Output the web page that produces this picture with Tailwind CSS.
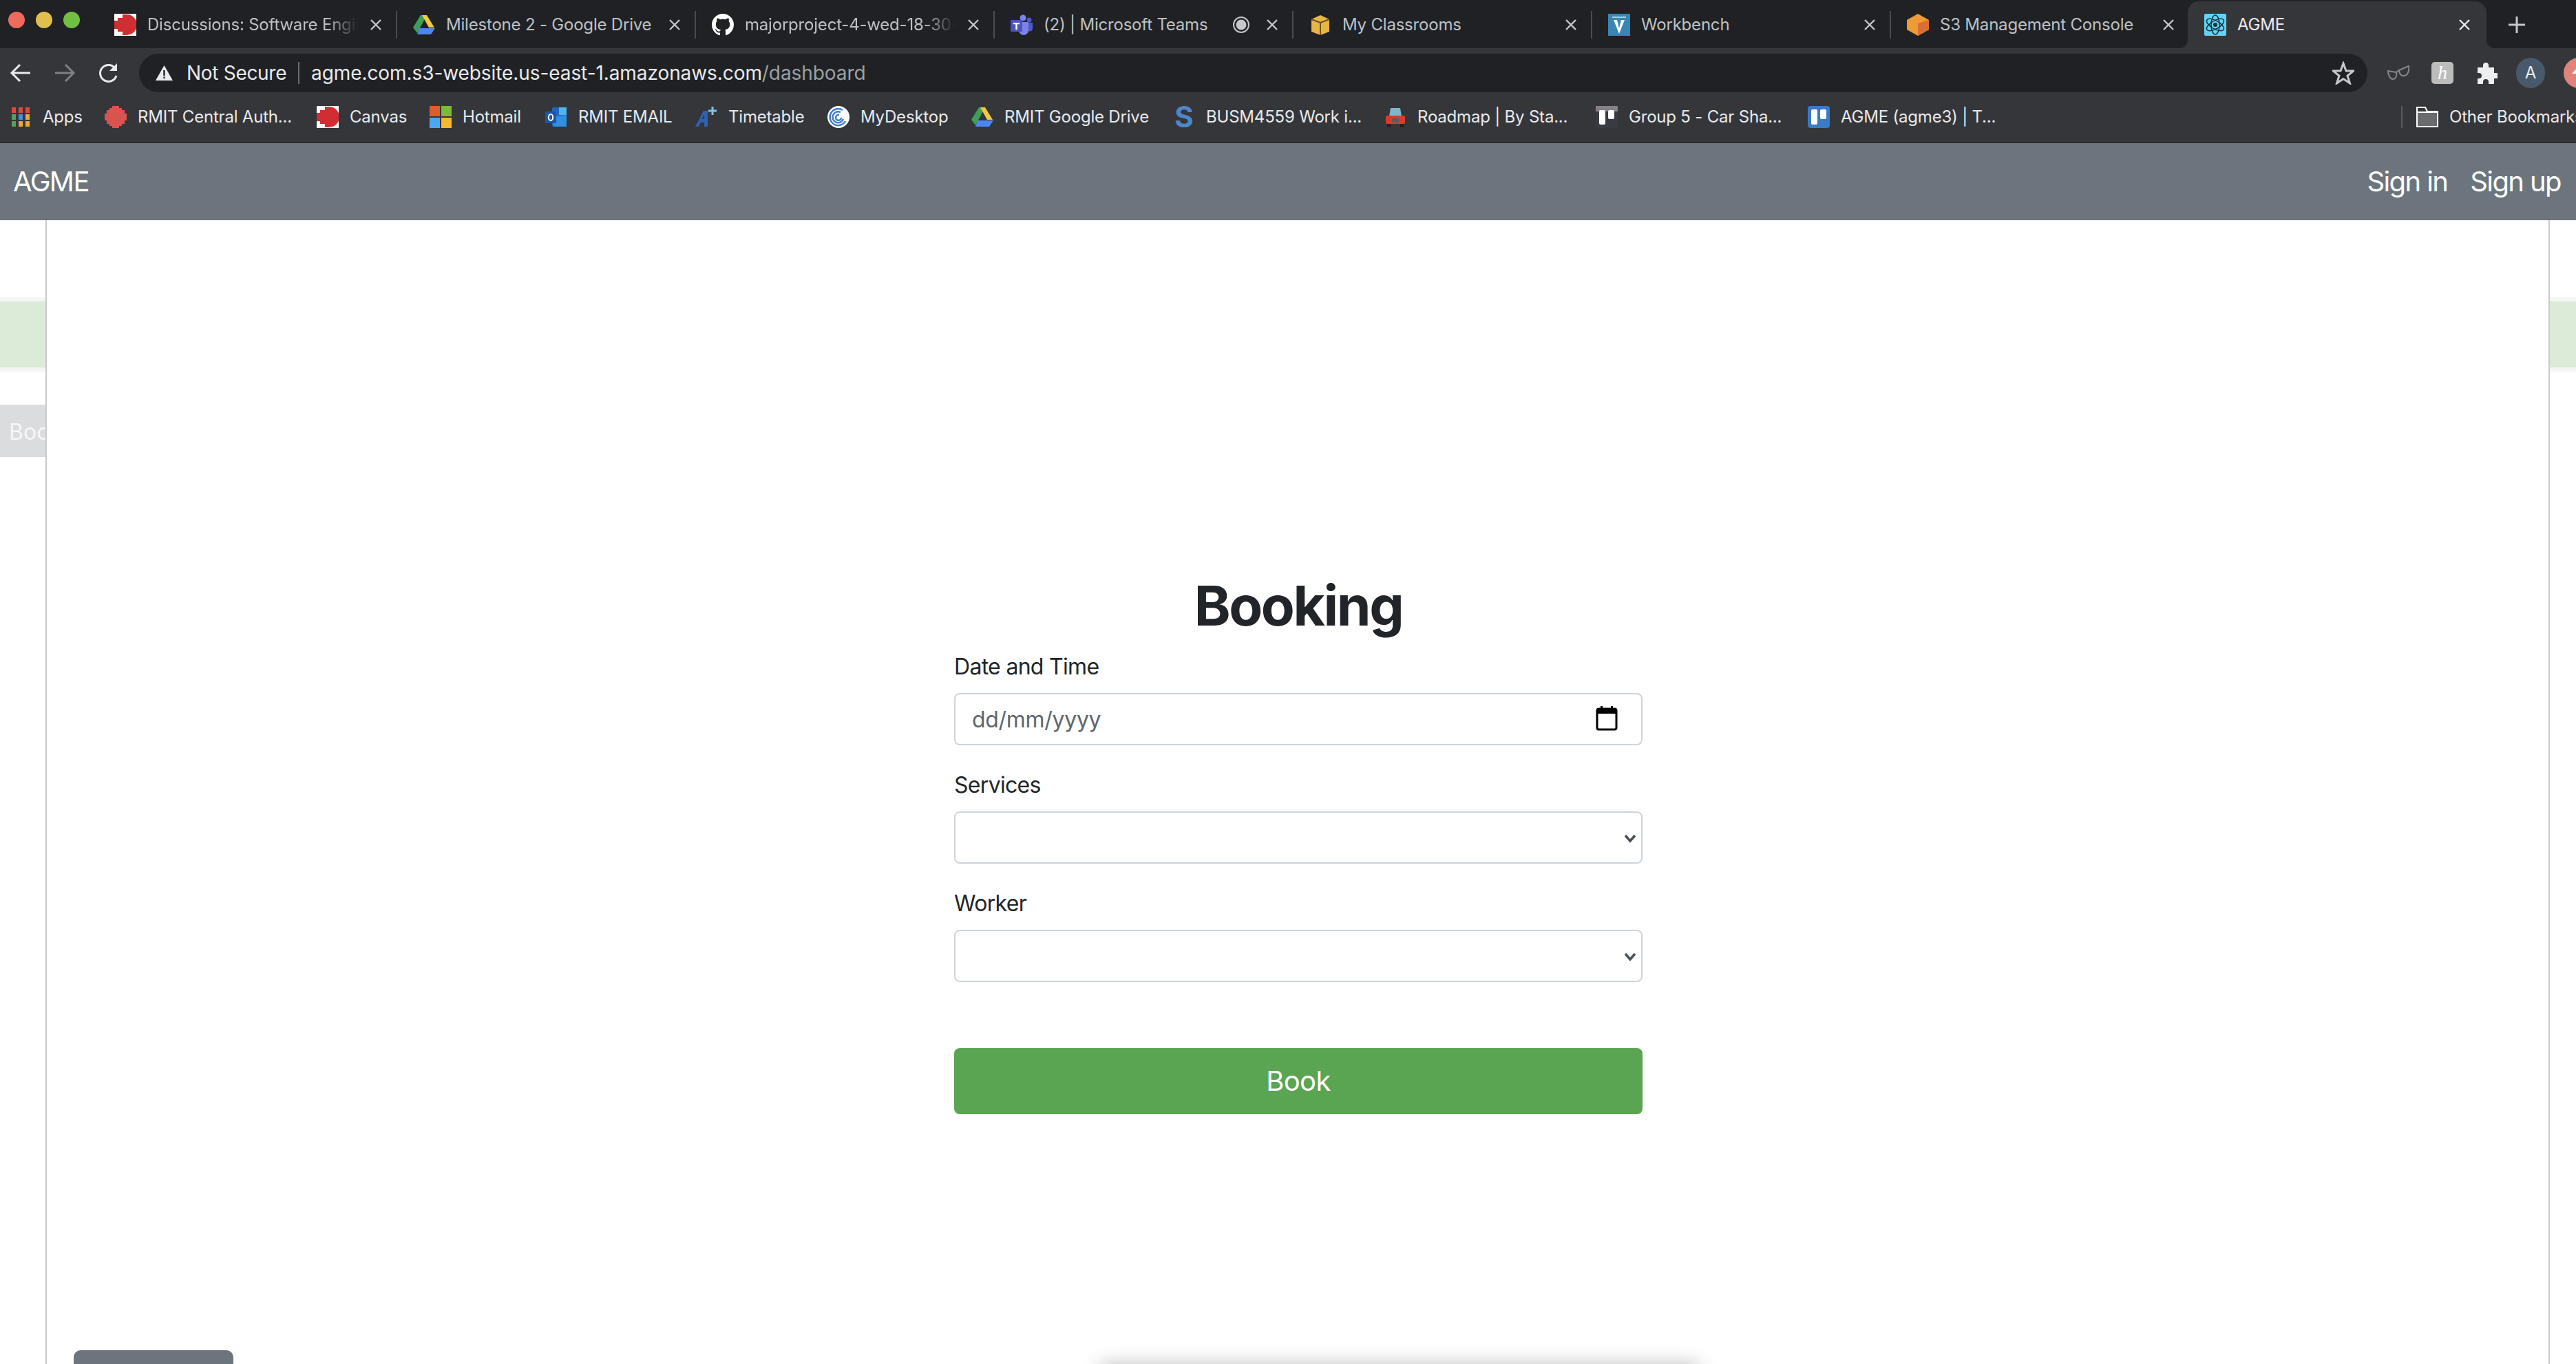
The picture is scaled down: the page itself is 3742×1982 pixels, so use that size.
<!DOCTYPE html>
<html lang="en">
<head>
<meta charset="utf-8">
<title>AGME</title>
<script src="https://cdn.jsdelivr.net/npm/@tailwindcss/browser@4"></script>
</head>
<body class="bg-white font-['Inter','Noto_Sans',sans-serif]">
<div class="flex h-[1982px] w-[3742px] flex-col overflow-hidden">

  <!-- tab strip -->
  <div class="flex h-[70px] shrink-0 items-end bg-[#202124] text-[24px] leading-[32px] tracking-[-0.2px] text-[#bdc1c6]">
    <div class="flex h-[70px] w-[143px] shrink-0 items-center pl-[12px] gap-[16px] pb-[12px]">
      <span class="h-[24px] w-[24px] rounded-full bg-[#ee6a5f]"></span>
      <span class="h-[24px] w-[24px] rounded-full bg-[#e0c04c]"></span>
      <span class="h-[24px] w-[24px] rounded-full bg-[#72c043]"></span>
    </div>

    <div class="flex h-[70px] w-[434px] shrink-0 items-center pt-[2px]">
      <div class="flex h-[40px] w-full items-center border-r-2 border-[#4a4b4f] pl-[23px]">
        <svg class="h-[32px] w-[32px] shrink-0" viewBox="0 0 32 32"><rect width="32" height="32" fill="#fff"/><path d="M12 1h6a15 15 0 0 1 0 30h-6v-5H5v-4H0V10h5V6h7z" fill="#d12e34"/></svg>
        <span class="ml-[16px] w-[306px] overflow-hidden whitespace-nowrap [mask-image:linear-gradient(to_right,black_85%,transparent)]">Discussions: Software Engineering</span>
        <svg class="ml-[16px] h-[20px] w-[20px]" viewBox="0 0 20 20"><path d="M3 3l14 14M17 3L3 17" stroke="#c4c7cb" stroke-width="2.4"/></svg>
      </div>
    </div>

    <div class="flex h-[70px] w-[434px] shrink-0 items-center pt-[2px]">
      <div class="flex h-[40px] w-full items-center border-r-2 border-[#4a4b4f] pl-[23px]">
        <svg class="h-[32px] w-[32px] shrink-0" viewBox="0 0 32 32"><path d="M11 2h9L12 17 6 28 0 20z" fill="#3f9e57"/><path d="M13 2h7l11 18h-8z" fill="#f3c93f"/><path d="M9 21h23l-6 9H6z" fill="#4f86ec"/></svg>
        <span class="ml-[16px] w-[306px] overflow-hidden whitespace-nowrap">Milestone 2 - Google Drive</span>
        <svg class="ml-[16px] h-[20px] w-[20px]" viewBox="0 0 20 20"><path d="M3 3l14 14M17 3L3 17" stroke="#c4c7cb" stroke-width="2.4"/></svg>
      </div>
    </div>

    <div class="flex h-[70px] w-[434px] shrink-0 items-center pt-[2px]">
      <div class="flex h-[40px] w-full items-center border-r-2 border-[#4a4b4f] pl-[23px]">
        <svg class="h-[32px] w-[32px] shrink-0" viewBox="0 0 16 16"><path fill="#fff" d="M8 0C3.58 0 0 3.58 0 8c0 3.54 2.29 6.53 5.47 7.59.4.07.55-.17.55-.38 0-.19-.01-.82-.01-1.49-2.01.37-2.53-.49-2.69-.94-.09-.23-.48-.94-.82-1.13-.28-.15-.68-.52-.01-.53.63-.01 1.08.58 1.23.82.72 1.21 1.87.87 2.33.66.07-.52.28-.87.51-1.07-1.78-.2-3.64-.89-3.64-3.95 0-.87.31-1.59.82-2.15-.08-.2-.36-1.02.08-2.12 0 0 .67-.21 2.2.82.64-.18 1.32-.27 2-.27.68 0 1.36.09 2 .27 1.53-1.04 2.2-.82 2.2-.82.44 1.1.16 1.92.08 2.12.51.56.82 1.27.82 2.15 0 3.07-1.87 3.75-3.65 3.95.29.25.54.73.54 1.48 0 1.07-.01 1.93-.01 2.2 0 .21.15.46.55.38A8.013 8.013 0 0016 8c0-4.42-3.58-8-8-8z"/></svg>
        <span class="ml-[16px] w-[306px] overflow-hidden whitespace-nowrap [mask-image:linear-gradient(to_right,black_85%,transparent)]">majorproject-4-wed-18-30-5</span>
        <svg class="ml-[16px] h-[20px] w-[20px]" viewBox="0 0 20 20"><path d="M3 3l14 14M17 3L3 17" stroke="#c4c7cb" stroke-width="2.4"/></svg>
      </div>
    </div>

    <div class="flex h-[70px] w-[434px] shrink-0 items-center pt-[2px]">
      <div class="flex h-[40px] w-full items-center border-r-2 border-[#4a4b4f] pl-[23px]">
        <svg class="h-[32px] w-[32px] shrink-0" viewBox="0 0 32 32"><circle cx="18" cy="6" r="4.5" fill="#7b83eb"/><circle cx="27" cy="9" r="3.5" fill="#5059c9"/><path d="M12 12h14v12a7 7 0 0 1-14 0z" fill="#7b83eb"/><path d="M26 13h6v9a4 4 0 0 1-6 3z" fill="#5059c9"/><rect y="9" width="17" height="17" rx="1.5" fill="#4b53bc"/><path d="M4 13h9v2.2h-3.3V23H7.300v-7.800H4z" fill="#fff"/></svg>
        <span class="ml-[16px] w-[262px] overflow-hidden whitespace-nowrap">(2) | Microsoft Teams</span>
        <svg class="ml-[12px] h-[26px] w-[26px] shrink-0" viewBox="0 0 26 26"><circle cx="13" cy="13" r="11" fill="none" stroke="#c4c7cb" stroke-width="2"/><circle cx="13" cy="13" r="7.500" fill="#c4c7cb"/></svg>
        <svg class="ml-[22px] h-[20px] w-[20px]" viewBox="0 0 20 20"><path d="M3 3l14 14M17 3L3 17" stroke="#c4c7cb" stroke-width="2.4"/></svg>
      </div>
    </div>

    <div class="flex h-[70px] w-[434px] shrink-0 items-center pt-[2px]">
      <div class="flex h-[40px] w-full items-center border-r-2 border-[#4a4b4f] pl-[23px]">
        <svg class="h-[32px] w-[32px] shrink-0" viewBox="0 0 32 32"><path d="M16 2l13 6v18l-13 5-13-5V8z" fill="#e8b645"/><path d="M3 8l13 5 13-5" fill="none" stroke="#6d5320" stroke-width="2"/><path d="M16 13v18" stroke="#6d5320" stroke-width="2"/></svg>
        <span class="ml-[16px] w-[306px] overflow-hidden whitespace-nowrap">My Classrooms</span>
        <svg class="ml-[16px] h-[20px] w-[20px]" viewBox="0 0 20 20"><path d="M3 3l14 14M17 3L3 17" stroke="#c4c7cb" stroke-width="2.4"/></svg>
      </div>
    </div>

    <div class="flex h-[70px] w-[434px] shrink-0 items-center pt-[2px]">
      <div class="flex h-[40px] w-full items-center border-r-2 border-[#4a4b4f] pl-[23px]">
        <svg class="h-[32px] w-[32px] shrink-0" viewBox="0 0 32 32"><rect width="32" height="32" fill="#3a85b5"/><path d="M8 9h5l3 12 3-12h5l-8 20z" fill="#fff"/><path d="M6 5h20" stroke="#a7cde4" stroke-width="2"/></svg>
        <span class="ml-[16px] w-[306px] overflow-hidden whitespace-nowrap">Workbench</span>
        <svg class="ml-[16px] h-[20px] w-[20px]" viewBox="0 0 20 20"><path d="M3 3l14 14M17 3L3 17" stroke="#c4c7cb" stroke-width="2.4"/></svg>
      </div>
    </div>

    <div class="flex h-[70px] w-[434px] shrink-0 items-center pt-[2px]">
      <div class="flex h-[40px] w-full items-center pl-[23px]">
        <svg class="h-[32px] w-[32px] shrink-0" viewBox="0 0 32 32"><path d="M16 0l16 9v14l-16 9L0 23V9z" fill="#ee9a36"/><path d="M16 14l16-5v14l-16 9z" fill="#d96f33"/></svg>
        <span class="ml-[16px] w-[306px] overflow-hidden whitespace-nowrap">S3 Management Console</span>
        <svg class="ml-[16px] h-[20px] w-[20px]" viewBox="0 0 20 20"><path d="M3 3l14 14M17 3L3 17" stroke="#c4c7cb" stroke-width="2.4"/></svg>
      </div>
    </div>

    <div class="relative ml-[-3px] flex h-[68px] w-[434px] shrink-0 items-center rounded-t-[16px] bg-[#35363a] pl-[24px] text-[#e8eaed]">
      <svg class="absolute bottom-0 left-[-12px] h-[12px] w-[12px]" viewBox="0 0 12 12"><path d="M12 0v12H0A12 12 0 0 0 12 0z" fill="#35363a"/></svg>
      <svg class="absolute bottom-0 right-[-12px] h-[12px] w-[12px]" viewBox="0 0 12 12"><path d="M0 0v12h12A12 12 0 0 1 0 0z" fill="#35363a"/></svg>
      <svg class="h-[32px] w-[32px] shrink-0" viewBox="0 0 32 32"><rect width="32" height="32" rx="2" fill="#61d3f5"/><g fill="none" stroke="#17313b" stroke-width="1.500"><ellipse cx="16" cy="16" rx="6" ry="14"/><ellipse cx="16" cy="16" rx="6" ry="14" transform="rotate(60 16 16)"/><ellipse cx="16" cy="16" rx="6" ry="14" transform="rotate(120 16 16)"/></g><circle cx="16" cy="16" r="3" fill="#17313b"/></svg>
      <span class="ml-[16px] w-[320px] overflow-hidden whitespace-nowrap">AGME</span>
      <svg class="h-[20px] w-[20px]" viewBox="0 0 20 20"><path d="M3 3l14 14M17 3L3 17" stroke="#e8eaed" stroke-width="2.4"/></svg>
    </div>

    <svg class="ml-[31px] mb-[21px] h-[26px] w-[26px] shrink-0" viewBox="0 0 26 26"><path d="M13 1v24M1 13h24" stroke="#c4c7cb" stroke-width="3"/></svg>
  </div>

  <!-- toolbar -->
  <div class="flex h-[70px] shrink-0 items-center bg-[#35363a] pt-[2px]">
    <svg class="ml-[14px] h-[32px] w-[32px] shrink-0" viewBox="0 0 32 32"><path d="M30 16H4M15 4L3 16l12 12" fill="none" stroke="#e8eaed" stroke-width="3"/></svg>
    <svg class="ml-[32px] h-[32px] w-[32px] shrink-0" viewBox="0 0 32 32"><path d="M2 16h26M17 4l12 12-12 12" fill="none" stroke="#7e8083" stroke-width="3"/></svg>
    <svg class="ml-[32px] h-[32px] w-[32px] shrink-0" viewBox="0 0 32 32"><path d="M27 20a12 12 0 1 1-2-11" fill="none" stroke="#e8eaed" stroke-width="3"/><path d="M28 2v11H17z" fill="#e8eaed"/></svg>

    <div class="ml-[28px] flex h-[56px] w-[3237px] shrink-0 items-center rounded-full bg-[#202124] pl-[24px] text-[28px] tracking-[-0.3px]">
      <svg class="h-[22px] w-[25px] shrink-0" viewBox="0 0 25 22"><path d="M12.500 0L25 22H0z" fill="#e8eaed"/><path d="M11.300 7h2.400v8h-2.400zM11.300 16.500h2.400V19h-2.400z" fill="#202124"/></svg>
      <span class="ml-[20px] w-[146px] whitespace-nowrap text-[#e8eaed]">Not Secure</span>
      <span class="ml-[16px] h-[32px] w-[2px] bg-[#6a6b6f]"></span>
      <span class="ml-[17px] whitespace-nowrap tracking-[-0.08px] text-[#e8eaed]">agme.com.s3-website.us-east-1.amazonaws.com<span class="text-[#9aa0a6]">/dashboard</span></span>
      <svg class="ml-auto mr-[19px] h-[34px] w-[32px] shrink-0" viewBox="0 0 32 34"><path d="M16 3l4 11h11l-9 7 3.500 11L16 25.500 6.500 32 10 21l-9-7h11z" fill="none" stroke="#c4c7cb" stroke-width="3"/></svg>
    </div>

    <svg class="ml-[29px] h-[26px] w-[32px] shrink-0" viewBox="0 0 32 26"><g fill="none" stroke="#85878a" stroke-width="2"><path d="M1 10l12 2c1 5-1 10-5 10s-7-6-7-12z"/><path d="M17 9l14-6c1 6-1 13-6 14s-8-3-8-8z"/><path d="M13 12l4-3"/></g></svg>
    <span class="ml-[32px] flex h-[32px] w-[32px] shrink-0 items-center justify-center rounded-[5px] bg-[#bcbcbc] font-['Liberation_Serif',serif] text-[28px] italic leading-none text-white">h</span>
    <svg class="ml-[32px] h-[32px] w-[32px] shrink-0" viewBox="0 0 32 32"><path d="M3 8h8V5a4 4 0 0 1 8 0v3h8v8h3a4 4 0 0 1 0 8h-3v8h-8v-3a4 4 0 0 0-8 0v3H3v-8h2a4 4 0 0 0 0-8H3z" fill="#eceef0"/></svg>
    <span class="ml-[27px] flex h-[44px] w-[42px] shrink-0 items-center justify-center rounded-full bg-[#47596a] text-[24px] text-[#e8eaed]">A</span>
    <span class="ml-[27px] flex h-[44px] w-[44px] shrink-0 items-center justify-center rounded-full bg-[#e0837c]">
      <svg class="h-[24px] w-[24px]" viewBox="0 0 24 24"><path d="M12 2l10 11h-6v9H8v-9H2z" fill="#fff"/></svg>
    </span>
  </div>

  <!-- bookmarks -->
  <div class="flex h-[68px] shrink-0 items-center overflow-hidden border-b-2 border-[#292a2d] bg-[#35363a] pb-[6px] pl-[14px] text-[24px] leading-[32px] tracking-[-0.2px] text-[#e8eaed]">
    <div class="flex w-[138px] shrink-0 items-center gap-[16px] whitespace-nowrap">
      <svg class="h-[32px] w-[32px] shrink-0" viewBox="0 0 32 32"><g fill="#e0483e"><rect x="3" y="2" width="6" height="8"/><rect x="13" y="2" width="6" height="8"/><rect x="23" y="2" width="6" height="8"/></g><rect x="3" y="12" width="6" height="8" fill="#5a9e5f"/><rect x="13" y="12" width="6" height="8" fill="#4a8af0"/><rect x="23" y="12" width="6" height="8" fill="#e8a83a"/><rect x="3" y="22" width="6" height="8" fill="#5a9e5f"/><rect x="13" y="22" width="6" height="8" fill="#e8a83a"/><rect x="23" y="22" width="6" height="8" fill="#e8a83a"/></svg>
      <span>Apps</span>
    </div>
    <div class="flex w-[308px] shrink-0 items-center gap-[16px] whitespace-nowrap">
      <svg class="h-[32px] w-[32px] shrink-0" viewBox="0 0 32 32"><path d="M11 0h10v3h4v3h4v5h3v10h-3v5h-4v3h-4v3H11v-3H7v-3H3v-5H0V11h3V6h4V3h4z" fill="#d9534f"/></svg>
      <span>RMIT Central Auth...</span>
    </div>
    <div class="flex w-[164px] shrink-0 items-center gap-[16px] whitespace-nowrap">
      <svg class="h-[32px] w-[32px] shrink-0" viewBox="0 0 32 32"><rect width="32" height="32" fill="#fff"/><path d="M12 1h6a15 15 0 0 1 0 30h-6v-5H5v-4H0V10h5V6h7z" fill="#d12e34"/></svg>
      <span>Canvas</span>
    </div>
    <div class="flex w-[168px] shrink-0 items-center gap-[16px] whitespace-nowrap">
      <svg class="h-[32px] w-[32px] shrink-0" viewBox="0 0 32 32"><rect width="15" height="15" fill="#e05a33"/><rect x="17" width="15" height="15" fill="#7fb83b"/><rect y="17" width="15" height="15" fill="#4ea6ef"/><rect x="17" y="17" width="15" height="15" fill="#f4b832"/></svg>
      <span>Hotmail</span>
    </div>
    <div class="flex w-[218px] shrink-0 items-center gap-[16px] whitespace-nowrap">
      <svg class="h-[32px] w-[32px] shrink-0" viewBox="0 0 32 32"><rect x="10" y="2" width="21" height="28" rx="2" fill="#1e66c0"/><rect x="20" y="2" width="11" height="11" fill="#4fb3f0"/><path d="M10 16l21-3v17H12z" fill="#2f8fe0"/><rect y="8" width="16" height="17" rx="1.500" fill="#1a56a8"/><ellipse cx="8" cy="16.500" rx="3.200" ry="4.500" fill="none" stroke="#fff" stroke-width="2"/></svg>
      <span>RMIT EMAIL</span>
    </div>
    <div class="flex w-[192px] shrink-0 items-center gap-[16px] whitespace-nowrap">
      <svg class="h-[32px] w-[32px] shrink-0" viewBox="0 0 32 32"><path d="M0 30L12 7h6v23h-5v-6H8l-3 6zM10 19h3v-7z" fill="#2f62ae"/><path d="M25 1v12M19 7h12" stroke="#7fc4e8" stroke-width="3"/></svg>
      <span>Timetable</span>
    </div>
    <div class="flex w-[209px] shrink-0 items-center gap-[16px] whitespace-nowrap">
      <svg class="h-[32px] w-[32px] shrink-0" viewBox="0 0 32 32"><circle cx="16" cy="16" r="16" fill="#fff"/><g fill="none" stroke="#3f7ed0" stroke-width="2.500"><path d="M26 22A12 12 0 1 1 22 6"/><path d="M23 19a8 8 0 1 1-4-10"/><path d="M20 17a4 4 0 1 1-3-4"/></g></svg>
      <span>MyDesktop</span>
    </div>
    <div class="flex w-[293px] shrink-0 items-center gap-[16px] whitespace-nowrap">
      <svg class="h-[32px] w-[32px] shrink-0" viewBox="0 0 32 32"><path d="M11 2h9L12 17 6 28 0 20z" fill="#3f9e57"/><path d="M13 2h7l11 18h-8z" fill="#f3c93f"/><path d="M9 21h23l-6 9H6z" fill="#4f86ec"/></svg>
      <span>RMIT Google Drive</span>
    </div>
    <div class="flex w-[307px] shrink-0 items-center gap-[16px] whitespace-nowrap">
      <span class="w-[32px] shrink-0 text-center text-[42px] font-bold leading-[32px] text-[#4f86c6]">S</span>
      <span>BUSM4559 Work i...</span>
    </div>
    <div class="flex w-[307px] shrink-0 items-center gap-[16px] whitespace-nowrap">
      <svg class="h-[32px] w-[32px] shrink-0" viewBox="0 0 32 32"><path d="M9 3h14l2 12H7z" fill="#7fb6c9"/><rect x="2" y="14" width="28" height="12" rx="2" fill="#d93b2b"/><rect x="11" y="18" width="10" height="6" fill="#5b5b60"/><rect x="4" y="26" width="5" height="5" fill="#222"/><rect x="23" y="26" width="5" height="5" fill="#222"/></svg>
      <span>Roadmap | By Sta...</span>
    </div>
    <div class="flex w-[308px] shrink-0 items-center gap-[16px] whitespace-nowrap">
      <svg class="h-[32px] w-[32px] shrink-0" viewBox="0 0 32 32"><rect width="32" height="32" rx="3" fill="#3a3a42"/><rect width="32" height="8" fill="#85808a"/><rect x="5" y="6" width="9" height="21" rx="2" fill="#fff"/><rect x="18" y="6" width="9" height="13" rx="2" fill="#fff"/></svg>
      <span>Group 5 - Car Sha...</span>
    </div>
    <div class="flex h-[32px] w-[864px] shrink-0 items-center gap-[16px] whitespace-nowrap border-r-2 border-[#5a5b5f]">
      <svg class="h-[32px] w-[32px] shrink-0" viewBox="0 0 32 32"><rect width="32" height="32" rx="4" fill="#3a7bc4"/><rect x="5" y="5" width="9" height="22" rx="2" fill="#fff"/><rect x="18" y="5" width="9" height="14" rx="2" fill="#fff"/></svg>
      <span>AGME (agme3) | T...</span>
    </div>
    <div class="ml-[20px] flex shrink-0 items-center gap-[16px] whitespace-nowrap">
      <svg class="h-[32px] w-[32px] shrink-0" viewBox="0 0 32 32"><path d="M1 8h30v22H1z" fill="#6b6c70"/><path d="M1 30V2h12l3 6h15v22zM1 9h30" fill="none" stroke="#fff" stroke-width="2"/></svg>
      <span>Other Bookmarks</span>
    </div>
  </div>

  <!-- page navbar -->
  <div class="flex h-[112px] shrink-0 items-center justify-between bg-[#6c757d] pl-[19px] pr-[22px] text-[40px] tracking-[-1.6px] text-white">
    <span>AGME</span>
    <div class="flex gap-[33px]">
      <span>Sign in</span>
      <span>Sign up</span>
    </div>
  </div>

  <!-- page body -->
  <div class="flex min-h-0 flex-1">
    <!-- page behind the panel, left -->
    <div class="w-[66px] shrink-0 overflow-hidden pt-[112px]">
      <div class="h-[108px] border-y-[6px] border-[#f4f6f4] bg-[#dbebd7]"></div>
      <div class="mt-[48px] flex h-[76px] items-center whitespace-nowrap bg-[#dbdcde] pl-[13px] pt-[3px] text-[32px] text-[#f6f6f7]">Book</div>
    </div>

    <!-- panel -->
    <div class="relative flex min-w-0 flex-1 justify-center overflow-hidden border-x-2 border-[#cacaca] bg-white pl-[2px] pt-[512px]">
      <form class="flex h-min w-[1000px] flex-col text-[32px] leading-[48px] tracking-[-0.7px] text-[#212529]">
        <h1 class="text-center text-[80px] font-bold leading-[96px] tracking-[-2.4px]">Booking</h1>
        <label class="mt-[17px] block">Date and Time</label>
        <div class="relative mt-[14px]">
          <input type="text" placeholder="dd/mm/yyyy" class="block h-[76px] w-full rounded-[8px] border-2 border-[#ced4da] bg-white px-[24px] text-[32px] tracking-[-0.3px] placeholder:text-[#5f666d]">
          <svg class="absolute right-[36px] top-[19px] h-[36px] w-[32px]" viewBox="0 0 32 36"><path d="M7 0h3v5H7zM22 0h3v5h-3z" fill="#000"/><rect x="2" y="4" width="28" height="30" rx="2.500" fill="none" stroke="#000" stroke-width="3"/><rect x="2" y="4" width="28" height="7" fill="#000"/></svg>
        </div>
        <label class="mt-[34px] block">Services</label>
        <div class="relative mt-[14px]">
          <select class="block h-[76px] w-full appearance-none rounded-[8px] border-2 border-[#ced4da] bg-white"></select>
          <svg class="pointer-events-none absolute right-[9px] top-[32px] h-[14px] w-[18px]" viewBox="0 0 18 14"><path d="M2 3l7 8 7-8" fill="none" stroke="#495057" stroke-width="3.500"/></svg>
        </div>
        <label class="mt-[34px] block">Worker</label>
        <div class="relative mt-[14px]">
          <select class="block h-[76px] w-full appearance-none rounded-[8px] border-2 border-[#ced4da] bg-white"></select>
          <svg class="pointer-events-none absolute right-[9px] top-[32px] h-[14px] w-[18px]" viewBox="0 0 18 14"><path d="M2 3l7 8 7-8" fill="none" stroke="#495057" stroke-width="3.500"/></svg>
        </div>
        <button type="button" class="mt-[96px] h-[96px] w-full rounded-[8px] bg-[#5aa552] text-[40px] tracking-[-0.6px] text-white">Book</button>
      </form>

      <span class="absolute bottom-0 left-[39px] h-[20px] w-[232px] rounded-t-[10px] bg-[#6c757d]"></span>
      <span class="absolute left-[1530px] top-[1662px] h-[40px] w-[870px] bg-white shadow-[0_0_28px_rgba(0,0,0,0.25)]"></span>
    </div>

    <!-- page behind the panel, right -->
    <div class="w-[38px] shrink-0 pt-[112px]">
      <div class="h-[108px] border-y-[6px] border-[#f4f6f4] bg-[#dbebd7]"></div>
    </div>
  </div>
</div>
</body>
</html>
